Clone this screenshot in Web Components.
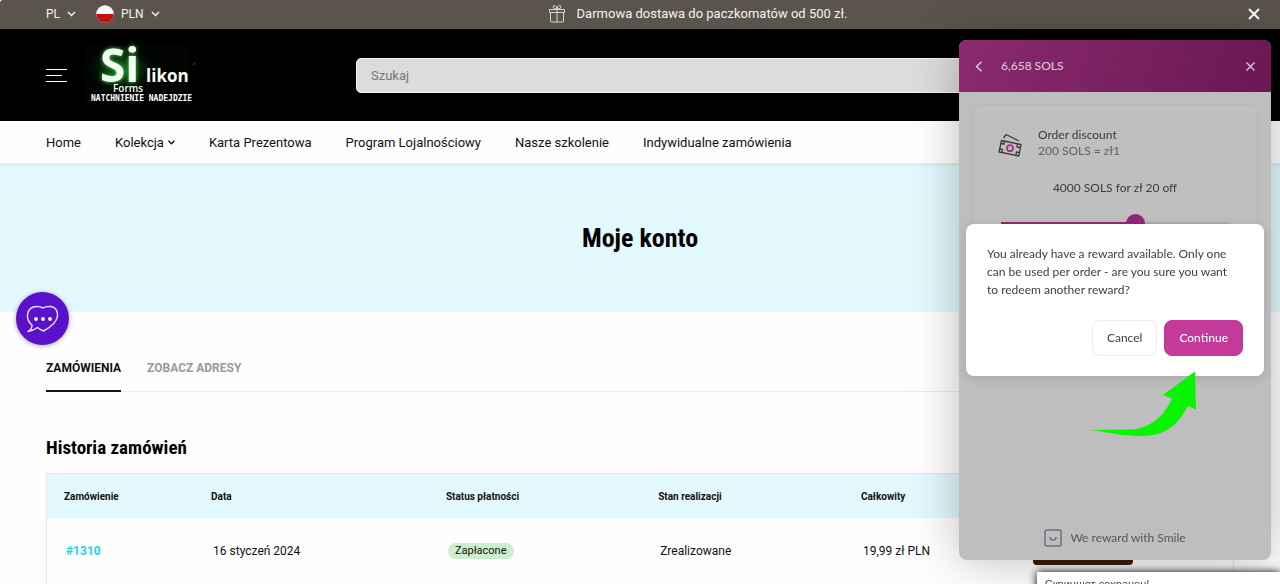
<!DOCTYPE html>
<html lang="pl">
<head>
<meta charset="utf-8">
<title>Moje konto</title>
<style>
body { margin: 0; font-family: Roboto, "Liberation Sans", sans-serif; color: #111; background: #fefefe; }
</style>
</head>
<body>
<shop-page></shop-page>
<script>
const make = (name, html) => customElements.define(name, class extends HTMLElement {
  constructor() {
    super();
    const t = document.createElement('template');
    t.innerHTML = '<style>*{box-sizing:border-box}a{color:inherit;text-decoration:none}button{font:inherit;border:0;padding:0;background:none;color:inherit;cursor:pointer}svg{display:block;flex:none}</style>' + html;
    this.attachShadow({ mode: 'open' }).append(t.content.cloneNode(true));
  }
});

make('announcement-bar', `
<style>
:host { display: grid; grid-template-columns: 1fr auto 1fr; align-items: center; box-sizing: border-box; height: 29px; padding: 0 20px 2px 46px; background: #5b544c; color: #f4f2f0; font-size: 13px; border-top-left-radius: 3px; }
.locale { display: flex; align-items: center; gap: 20px; font-size: 12px; }
.locale button { display: flex; align-items: center; gap: 7px; }
.message { display: flex; align-items: center; gap: 12px; margin-left: 90px; }
.close { justify-self: end; }
</style>
<div class="locale">
  <button>PL <svg width="9" height="6" viewBox="0 0 9 6" fill="none" stroke="currentColor" stroke-width="1.5"><path d="M1 1l3.5 3.5L8 1"/></svg></button>
  <button><svg width="18" height="18" viewBox="0 0 18 18"><circle cx="9" cy="9" r="8.7" fill="#f7f7f7"/><path d="M.3 9a8.7 8.7 0 0 0 17.4 0z" fill="#bf1212"/></svg> <span>PLN</span> <svg width="9" height="6" viewBox="0 0 9 6" fill="none" stroke="currentColor" stroke-width="1.5"><path d="M1 1l3.5 3.5L8 1"/></svg></button>
</div>
<div class="message"><svg width="16" height="18" viewBox="0 0 16 18" fill="none" stroke="#d8d5d1"><path d="M.5 4.5h15v3H.5zM1.500 7.500v8.500q0 1 1 1h11q1 0 1-1V7.500M8 4v13M8 4Q4 4.500 4 2q0-1.500 1.500-1.500Q7.500.5 8 4Q8.500.5 10.500.5Q12 .5 12 2q0 2.500-4 2"/></svg><slot></slot></div>
<button class="close" aria-label="Zamknij"><svg width="12" height="12" viewBox="0 0 12 12" fill="none" stroke="#fff" stroke-width="2"><path d="M1 1l10 10M11 1L1 11"/></svg></button>`);

make('shop-logo', `
<style>
:host { display: block; width: 112px; }
svg { width: 100%; }
</style>
<svg viewBox="0 -14 112 88" role="img" aria-label="Silikon Forms">
<defs><radialGradient id="g"><stop offset="0" stop-color="#1c7a22" stop-opacity=".9"/><stop offset=".55" stop-color="#0c3a10" stop-opacity=".6"/><stop offset="1" stop-color="#000" stop-opacity="0"/></radialGradient></defs>
<rect width="104" height="60" fill="#020402"/>
<ellipse cx="36" cy="24" rx="36" ry="26" fill="url(#g)"/>
<g font-family="Open Sans, sans-serif" font-weight="700" fill="#f3fff3">
<text x="15" y="37" font-size="46" style="filter:drop-shadow(0 0 2px #3be044)">Si</text>
<text x="61" y="37" font-size="17">likon</text>
<text x="28" y="47" font-size="10" font-weight="600">Forms</text></g>
<text x="6" y="56" font-family="DejaVu Sans Mono, monospace" font-weight="700" font-size="8" fill="#fff">NATCHNIENIE NADEJDZIE</text>
<path d="M108 20l2-2" stroke="#555"/>
</svg>`);

make('shop-header', `
<style>
:host { display: grid; grid-template-columns: 282px minmax(0, 630px); gap: 28px; align-items: center; box-sizing: border-box; height: 92px; padding: 0 46px; background: #000; }
.brand { display: flex; align-items: center; gap: 18px; }
input { display: block; width: 100%; height: 35px; padding: 0 14px; border: 1px solid #f4f4f4; border-radius: 5px; background: #dcdcdc; font: 13px Roboto, sans-serif; color: #222; }
input::placeholder { color: #777; opacity: 1; }
</style>
<div class="brand">
<button aria-label="Menu"><svg width="21" height="14" viewBox="0 0 21 14" stroke="#fff"><path d="M0 1.500h21M0 7.500h16M0 13.500h21"/></svg></button>
<shop-logo></shop-logo>
</div>
<input type="search" placeholder="Szukaj" aria-label="Szukaj">`);

make('shop-nav', `
<style>
:host { display: block; border-bottom: 1px solid #dceef0; box-shadow: 0 1px 3px #0001; position: relative; }
nav { display: flex; align-items: center; gap: 34px; height: 42px; padding: 0 46px; font-size: 13px; }
a { display: flex; align-items: center; gap: 4px; }
</style>
<nav><a href="#">Home</a><a href="#">Kolekcja <svg width="7" height="5" viewBox="0 0 7 5" fill="none" stroke="#111" stroke-width="1.4"><path d="M.5.7l3 3 3-3"/></svg></a><a href="#">Karta Prezentowa</a><a href="#">Program Lojalnościowy</a><a href="#">Nasze szkolenie</a><a href="#">Indywidualne zamówienia</a></nav>`);

make('page-banner', `
<style>
:host { display: flex; align-items: center; justify-content: center; height: 148px; background: #e3f9fd; }
h1 { margin: 0; font: 700 26px/32px "Roboto Condensed", Roboto, sans-serif; color: #000; }
</style>
<h1><slot></slot></h1>`);

make('account-tabs', `
<style>
:host { display: flex; gap: 26px; margin-top: 34px; border-bottom: 1px solid #ececec; font-size: 12px; font-weight: 700; }
a { padding: 15px 0; line-height: 14px; height: 46px; margin-bottom: -1px; color: #999; }
a.on { color: #111; border-bottom: 2px solid #111; }
</style>
<a class="on" href="#">ZAMÓWIENIA</a><a href="#">ZOBACZ ADRESY</a>`);

make('order-history', `
<style>
:host { display: block; }
h2 { margin: 43px 0 12px; font: 700 19px/26px "Roboto Condensed", Roboto, sans-serif; color: #000; }
table { width: 100%; border-collapse: separate; border-spacing: 0; table-layout: fixed; border: 1px solid #e6e9e9; font-size: 12px; }
th { height: 44px; padding: 0 17px; text-align: left; font-size: 10px; font-weight: 700; background: #e3f9fd; }
td { height: 66px; padding: 0 19px; }
a { color: #1fd2e8; font-weight: 700; }
.pill { display: inline-block; padding: 0 7px; border-radius: 8px; background: #cdeecd; font-size: 11px; line-height: 16px; }
.act { display: block; width: 100px; height: 28px; border-radius: 4px; background: #3a1c06; }
</style>
<h2>Historia zamówień</h2>
<table>
<colgroup><col style="width:12.4%"><col style="width:19.8%"><col style="width:17.9%"><col style="width:17.1%"><col style="width:14.3%"><col></colgroup>
<thead><tr><th>Zamówienie</th><th>Data</th><th>Status płatności</th><th>Stan realizacji</th><th>Całkowity</th><th></th></tr></thead>
<tbody><tr><td><a href="#">#1310</a></td><td>16 styczeń 2024</td><td><span class="pill">Zapłacone</span></td><td>Zrealizowane</td><td>19,99 zł PLN</td><td><button class="act" aria-label="Szczegóły"></button></td></tr></tbody>
</table>`);

make('chat-launcher', `
<style>
:host { position: fixed; left: 16px; bottom: 239px; }
button { display: grid; place-items: center; width: 53px; height: 53px; border-radius: 50%; background: #5b10cc; box-shadow: 0 1px 5px #0005; }
</style>
<button aria-label="Czat"><svg width="33" height="28" viewBox="0 0 33 28" fill="none" stroke="#e9dcff" stroke-width="1.5" stroke-linejoin="round"><path d="M2 26.500Q6 24.500 6 20Q1 16 1.500 10Q2.500 1.500 11 1.500Q14.500 1.500 17 3Q20 1 25 1.500Q32 3 31.500 11Q30.500 19 17.500 26Q14 24.500 11.500 22.500Q7.500 25.500 2 26.500z"/><g fill="#fff" stroke="none"><circle cx="10" cy="14" r="1.900"/><circle cx="17" cy="14" r="1.900"/><circle cx="24" cy="14" r="1.900"/></g></svg></button>`);

make('confirm-dialog', `
<style>
:host { position: absolute; left: 7px; right: 7px; top: 184px; box-sizing: border-box; padding: 21px 21px 20px; border-radius: 8px; background: #fff; color: #414141; box-shadow: 0 2px 12px #0002; }
p { margin: 0 8px 0 0; font-size: 12px; line-height: 18px; }
.actions { display: flex; justify-content: flex-end; gap: 7px; margin-top: 21px; }
button { height: 36px; padding: 0 14px; border-radius: 8px; font-size: 12px; border: 1px solid #ececec; }
.go { background: #c43a9b; border-color: #c43a9b; color: #fff; font-weight: 500; }
</style>
<p><slot></slot></p>
<div class="actions"><button>Cancel</button><button class="go">Continue</button></div>`);

make('reward-panel', `
<style>
:host { position: fixed; right: 9px; top: 40px; bottom: 24px; width: 312px; display: flex; flex-direction: column; border-radius: 8px; background: #bebebe; color: #3c3c3c; font: 12px/16px "Proxima Nova", Lato, sans-serif; box-shadow: 0 0 50px #0004; }
header { display: flex; align-items: center; gap: 18px; height: 52px; padding: 0 16px; border-radius: 8px 8px 0 0; background: linear-gradient(110deg, #8b2a70, #6a1753); color: #dcc5d5; }
header span { flex: 1; font-weight: 500; }
.card { margin: 14px 14px 0; padding: 21px 25px; border-radius: 8px; box-shadow: 0 0 5px #0001; background: #bfbfbf; }
.row { display: flex; gap: 16px; align-items: end; }
.row p { margin: 0; }
.sub { color: #58636e; }
.pick { display: block; text-align: center; margin: 21px 0 17px; }
input { appearance: none; display: block; width: 228px; height: 20px; margin: 0 auto; background: linear-gradient(90deg, #90297a 60%, #adadad 60%) center/100% 2px no-repeat; }
input::-webkit-slider-thumb { appearance: none; width: 19px; height: 19px; border-radius: 50%; background: #90297a; }
footer { display: flex; align-items: center; justify-content: center; gap: 8px; height: 46px; margin-top: auto; border-top: 1px solid #bababa; color: #565656; }
.arrow { position: absolute; left: 132px; top: 330px; }
</style>
<header><button aria-label="Back"><svg width="8" height="11" viewBox="0 0 8 11" fill="none" stroke="currentColor" stroke-width="1.500"><path d="M6.500.8L1.500 5.500l5 4.700"/></svg></button><span>6,658 SOLS</span><button aria-label="Close"><svg width="9" height="9" viewBox="0 0 9 9" stroke="currentColor" stroke-width="1.400"><path d="M.5.5l8 8M8.500.5l-8 8"/></svg></button></header>
<section class="card">
<div class="row"><svg width="24" height="26" viewBox="0 1 24 24" fill="none" stroke="#3a3a3a" stroke-width="1.300"><path d="M3.500 7.500L23 11.500L20.800 23L1 19zM5.500 5L8 1.500L21 8"/><path d="M6.500 8.500L6 11L3 10.500M19.500 11L19 14L22 14.500M1.800 16L4.500 16.500L4 19.500M21.500 19.500L18.500 19L18 22"/><circle cx="12" cy="15.200" r="3" stroke="#a83488" stroke-width="1.800"/></svg><div><p>Order discount</p><p class="sub">200 SOLS = zł1</p></div></div>
<label class="pick" for="amount">4000 SOLS for zł 20 off</label>
<input id="amount" type="range" min="0" max="100" value="60">
</section>
<footer><svg width="18" height="18" viewBox="0 0 18 18" fill="none" stroke="#68727c" stroke-width="1.500"><rect x="1" y="1" width="16" height="16" rx="2"/><path d="M6 8q0 3 3 3t3-3"/></svg>We reward with Smile</footer>
<confirm-dialog>You already have a reward available. Only one can be used per order - are you sure you want to redeem another reward?</confirm-dialog>
<svg class="arrow" width="106" height="68" viewBox="0 0 106 68"><path d="M0 60L42 59.500C62 57 74 44 81 28.500L72 25L104 1.500L105 39.500L97 36C85 58 72 66 50 66C32 66 14 62 0 60z" fill="#08f400"/></svg>`);

make('system-toast', `
<style>
:host { position: fixed; left: 81%; right: 0; top: calc(100% - 12px); background: #fff; box-shadow: 0 0 8px #000; padding: 5px 8px; color: #444; font: 11px/14px "Liberation Sans", sans-serif; white-space: nowrap; }
</style>
<slot></slot>`);

make('shop-page', `
<style>
:host { display: block; height: 100vh; overflow: hidden; }
main { padding: 0 46px; }
</style>
<announcement-bar>Darmowa dostawa do paczkomatów od 500 zł.</announcement-bar>
<shop-header></shop-header>
<shop-nav></shop-nav>
<page-banner>Moje konto</page-banner>
<main><account-tabs></account-tabs><order-history></order-history></main>
<chat-launcher></chat-launcher>
<reward-panel></reward-panel>
<system-toast>Скриншот сохранен!</system-toast>`);
</script>
</body>
</html>
